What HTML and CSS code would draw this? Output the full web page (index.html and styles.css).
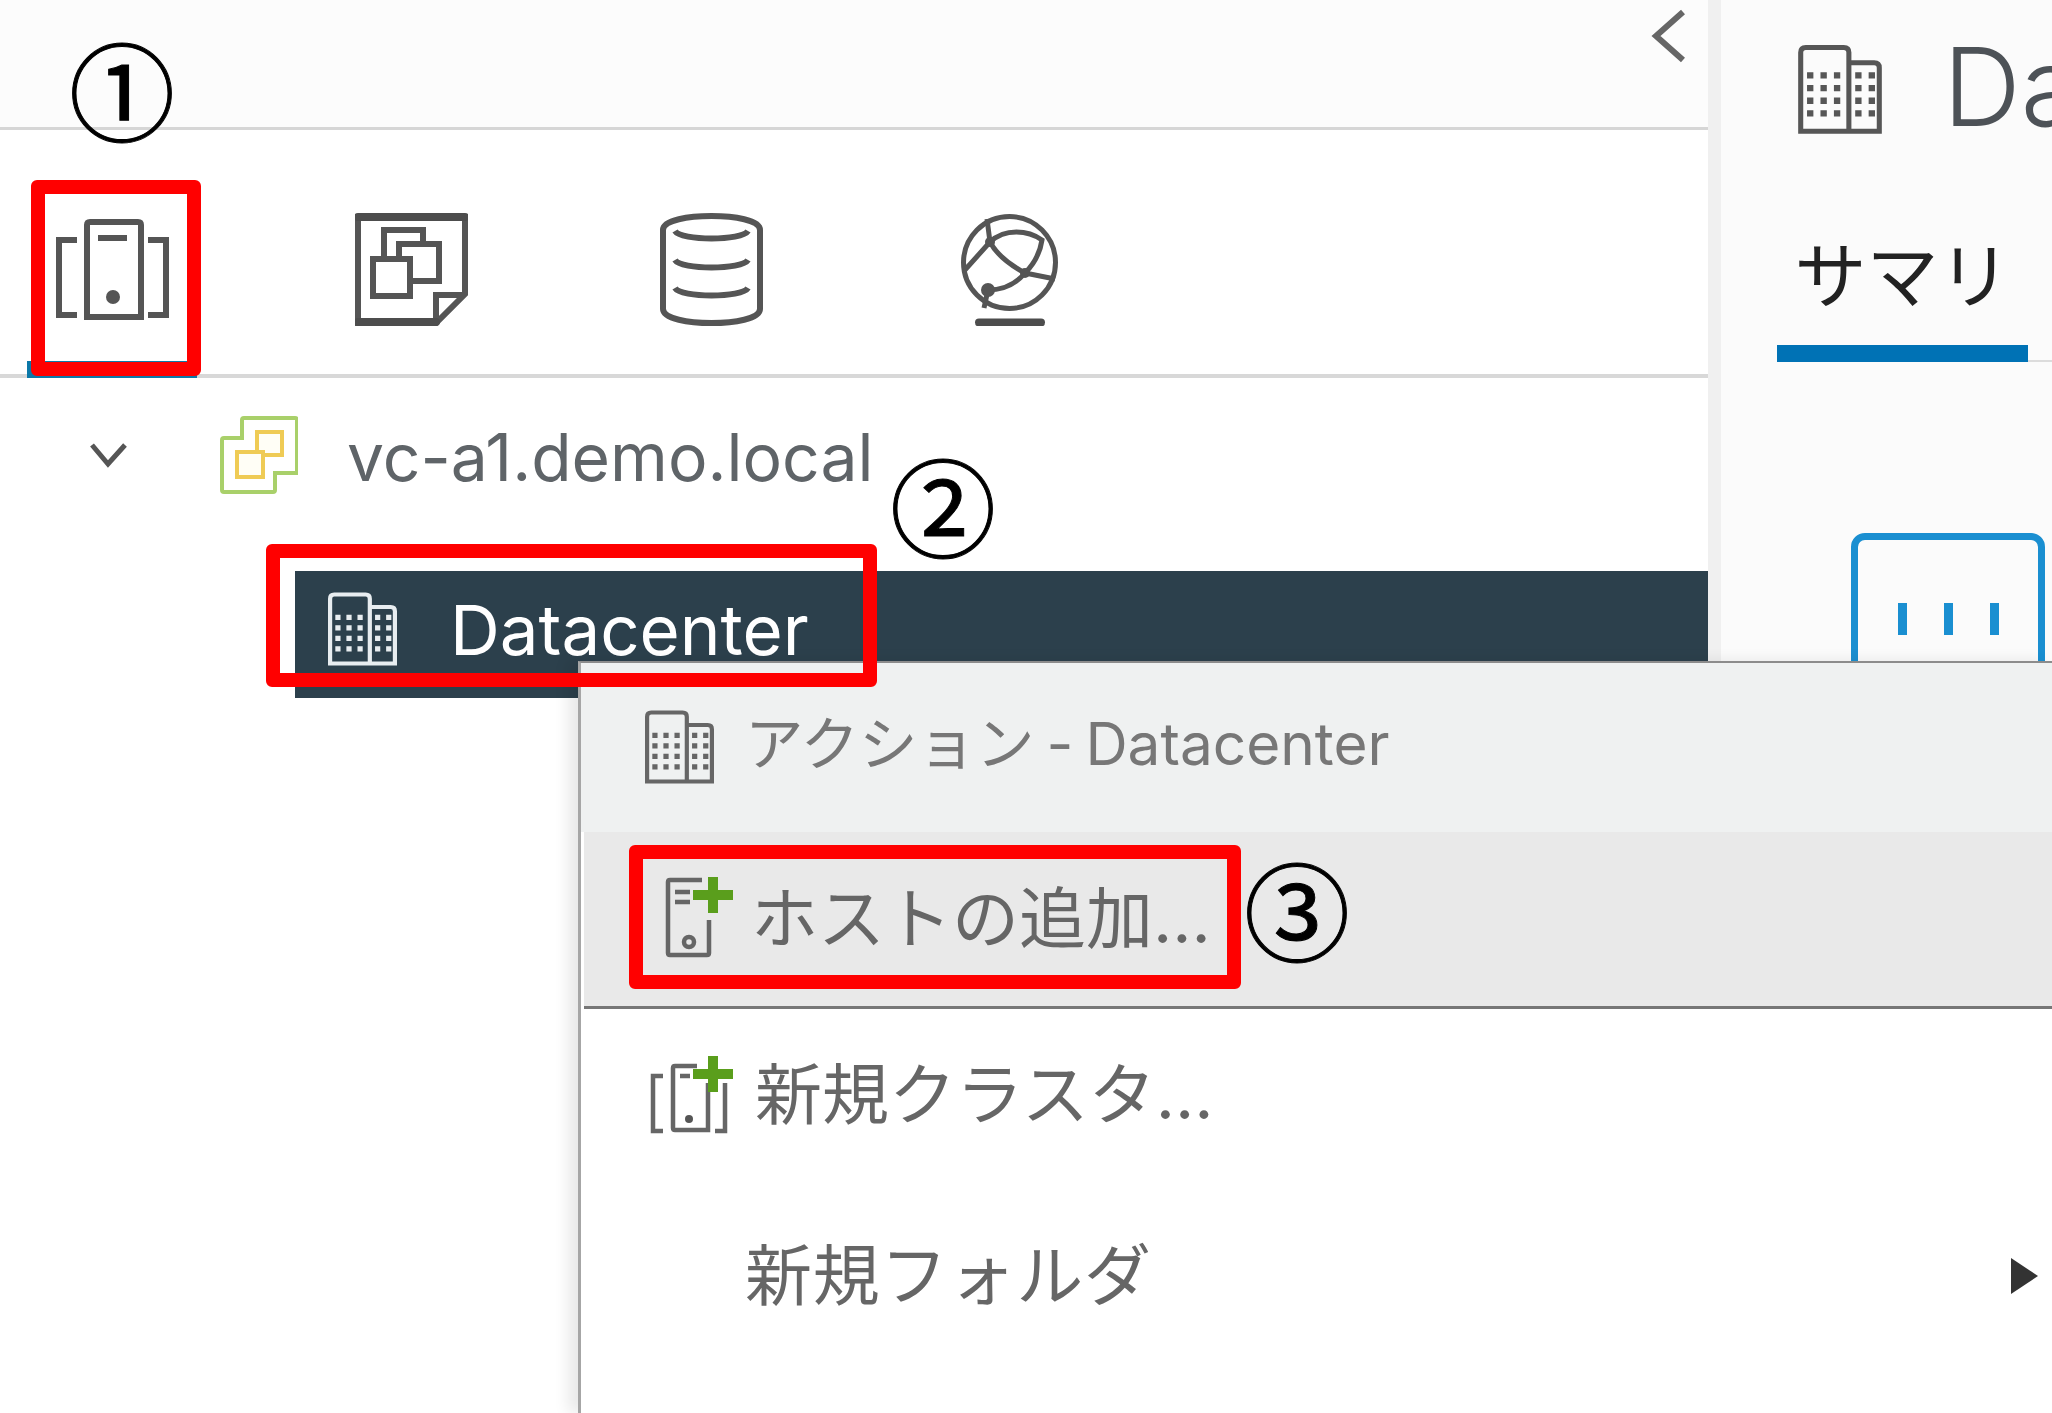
FILE: index.html
```html
<!DOCTYPE html>
<html lang="ja">
<head>
<meta charset="utf-8">
<title>vSphere Client</title>
<link rel="stylesheet" href="styles.css">
</head>
<body>
<svg class="defs" width="0" height="0" aria-hidden="true">
  <symbol id="building" viewBox="2 1 33 35.500">
    <path class="ln" d="M3 35V4q0-2 2-2h15q2 0 2 2v31zM22 8h10q2 0 2 2v25H22"/>
    <path class="dots" d="M5.500 13h15M5.500 18h15M5.500 23h15M5.500 28h15M24.500 13h8M24.500 18h8M24.500 23h8M24.500 28h8"/>
  </symbol>
</svg>

<div class="app">
  <section class="nav">
    <header class="nav-head">
      <svg class="collapse" viewBox="0 0 35 54"><path d="M32 3 5 27l27 24"/></svg>
    </header>
    <div class="tabs">
      <div class="tab active">
        <svg class="tab-icon" viewBox="0 0 113 113"><g class="ico">
          <path d="M31 104V12q0-3 3-3h48q3 0 3 3v92zM42 25h29M21 27H3v75h18M92 27h18v75H92"/></g>
          <circle class="fill" cx="57" cy="84" r="7"/></svg>
      </div>
      <div class="tab">
        <svg class="tab-icon" viewBox="0 0 113 113"><g class="ico">
          <path d="M3 4h107v77l-29 29H3zM81 110V82h28M29 44V17h39v12M44 44V31h40v37H55M18 46h37v37H18z"/></g>
          <path class="thick" d="M3 4h107M3 109h78"/></svg>
      </div>
      <div class="tab">
        <svg class="tab-icon" viewBox="0 0 113 113"><g class="ico">
          <path d="M8 17C8 7 34 3 56.500 3S105 7 105 17v79c0 10-26 14-48.500 14S8 106 8 96zM20 18c6 10 67 10 73 0M20 47c6 10 67 10 73 0M20 75c6 10 67 10 73 0"/></g></svg>
      </div>
      <div class="tab">
        <svg class="tab-icon" viewBox="0 0 113 113"><g class="ico globe">
          <circle cx="55.500" cy="49.500" r="46"/>
          <path d="M36 29 33 6M36 29 10 58M36 29c15-14 38-12 52-2-2 13-8 24-17 33-15-8-28-18-35-31M71 60l30 6M71 60c-10 12-23 17-37 17l-4 18"/></g>
          <circle class="fill" cx="36" cy="29" r="5"/><circle class="fill" cx="71" cy="60" r="5"/><circle class="fill" cx="34" cy="77" r="7"/>
          <path class="thick" d="M25 109.500h62"/></svg>
      </div>
    </div>
    <div class="tree">
      <div class="tree-root">
        <svg class="tree-chevron" viewBox="0 0 39 26"><path d="M3 3l16 19L36 3"/></svg>
        <svg class="vc-icon" viewBox="0 0 78 79">
          <path class="vc-green" d="M24 2h51q2 0 2 2v53H55v17q0 2-2 2H4q-2 0-2-2V24q0-2 2-2h18V4q0-2 2-2z"/>
          <rect class="vc-yellow" x="37" y="16" width="25" height="23"/>
          <rect class="vc-yellow" x="17" y="36" width="26" height="25"/>
        </svg>
        <span class="tree-label">vc-a1.demo.local</span>
      </div>
      <div class="tree-selected">
        <svg class="dc-icon light"><use href="#building"/></svg>
        <span>Datacenter</span>
      </div>
    </div>
  </section>

  <div class="divider"></div>

  <section class="detail">
    <div class="detail-head">
      <svg class="detail-icon"><use href="#building"/></svg>
      <h1 class="detail-title">Datacenter</h1>
    </div>
    <div class="detail-tabs">
      <div class="detail-tab">サマリ</div>
      <div class="detail-rest"></div>
    </div>
    <div class="card">
      <span class="tick"></span><span class="tick"></span><span class="tick"></span>
    </div>
  </section>
</div>

<div class="menu">
  <div class="menu-head">
    <svg class="dc-icon"><use href="#building"/></svg>
    <span class="menu-title">アクション - Datacenter</span>
  </div>
  <div class="menu-item hover">
    <svg class="add-host" viewBox="0 0 68 84"><g class="ico sm">
      <path d="M37 3H5q-2 0-2 2v71q0 2 2 2h37q2 0 2-2V43M10 15h15M10 25h15"/><circle cx="24" cy="65" r="5"/></g>
      <path class="plus" d="M48 0v36M28 18h40"/></svg>
    <span class="menu-label">ホストの追加...</span>
  </div>
  <div class="menu-list">
    <div class="menu-item plain">
      <svg class="add-cluster" viewBox="0 0 83 78"><g class="ico sm">
        <path d="M13 20H3v55h10M47 10H25q-2 0-2 2v60q0 2 2 2h33V27M30 20h10M65 75h10V27"/><circle class="fill" cx="39" cy="63" r="4"/></g>
        <path class="plus" d="M63 0v36M43 18h40"/></svg>
      <span class="menu-label">新規クラスタ...</span>
    </div>
    <div class="menu-item plain folder">
      <span class="menu-label wide">新規フォルダ</span>
      <i class="arrow"></i>
    </div>
  </div>
</div>

<div class="mark mark-1"></div>
<div class="mark mark-2"></div>
<div class="mark mark-3"></div>
<span class="num num-1">①</span>
<span class="num num-2">②</span>
<span class="num num-3">③</span>
</body>
</html>
```
FILE: styles.css
```css
* { box-sizing: border-box; }
html, body { margin: 0; height: 100%; }
body {
  width: 2052px; height: 1413px; overflow: hidden; position: relative; background: #fff;
  font-family: Inter, "Noto Sans CJK JP", sans-serif; color: #565656;
}
.defs { position: absolute; }
.app { display: grid; grid-template-columns: 1708px 13px 1fr; height: 100%; }
.ico, .ln, .collapse path, .tree-chevron path { fill: none; stroke: #555; stroke-width: 6; }
.ico.sm { stroke: #666; stroke-width: 4.500; }
.ico.globe { stroke-width: 5; }
.ln { stroke-width: 2; stroke: currentColor; }
.dots { fill: none; stroke: currentColor; stroke-width: 2.500; stroke-dasharray: 2.500 2.800; }
.fill { fill: #555; stroke: none; }
.thick { fill: none; stroke: #4d4d4d; stroke-width: 8; stroke-linecap: round; }
.plus { fill: none; stroke: #5a9e1c; stroke-width: 10; }

.nav { background: #fff; min-width: 0; }
.nav-head {
  height: 130px; background: #fcfcfc; border-bottom: 3px solid #d6d6d6;
  display: flex; justify-content: flex-end; padding: 9px 22px 0 0;
}
.collapse { width: 35px; height: 54px; }
.collapse path { stroke: #666; }
.tabs {
  height: 248px; border-bottom: 4px solid #d8d8d8;
  display: flex; gap: 129.500px; padding-left: 27px;
}
.tab {
  width: 170px; height: 248px; padding-top: 83px;
  display: flex; justify-content: center; align-items: flex-start;
}
.tab.active { border-bottom: 17px solid #0b78a8; }
.tab-icon { width: 113px; height: 113px; }

.tree { display: flex; flex-direction: column; padding-top: 38px; }
.tree-root { display: flex; align-items: center; height: 79px; padding-left: 89px; }
.tree-chevron { width: 39px; height: 26px; margin-right: 92px; margin-top: -2px; }
.tree-chevron path { stroke: #555; stroke-width: 5; }
.vc-icon { width: 78px; height: 79px; margin-right: 49px; }
.vc-green { fill: #fff; stroke: #a9d06a; stroke-width: 4; }
.vc-yellow { fill: #fffef6; stroke: #efcb55; stroke-width: 4; }
.tree-label { font-size: 66px; line-height: 79px; color: #5f6468; white-space: nowrap; margin-top: 4px; }
.tree-selected {
  margin: 76px 0 0 295px; height: 127px; background: #2c404c; color: #fff;
  display: flex; align-items: center; gap: 53px; padding: 0 0 10px 33px;
  font-size: 69px;
}
.dc-icon { width: 69px; height: 75px; }
.light { color: #e8edf0; }

.divider { background: #f0f0f0; }

.detail { background: #fbfbfb; min-width: 0; overflow: hidden; }
.detail-head { display: flex; align-items: center; gap: 68px; height: 90px; margin-top: 45px; padding-left: 77px; color: #565656; }
.detail-icon { width: 84px; height: 90px; flex: none; }
.detail-title { margin: -7px 0 0 -7px; font-size: 108px; line-height: 90px; font-weight: 300; color: #4d5257; white-space: nowrap; }
.detail-tabs { display: flex; align-items: flex-end; padding-left: 56px; height: 227px; }
.detail-tab {
  width: 251px; height: 137px; display: flex; justify-content: center; padding-top: 9px;
  font-size: 72px; line-height: 84px; color: #222; border-bottom: 17px solid #0072b5;
}
.detail-rest { flex: 1; border-bottom: 2px solid #dcdcdc; }
.card {
  width: 194px; height: 200px; margin: 171px 0 0 130px;
  border: 7px solid #1a8fd1; border-radius: 14px;
  display: flex; gap: 37px; justify-content: center; padding-top: 63px;
}
.tick { width: 9px; height: 32px; background: #1a8fd1; }

.menu {
  position: absolute; left: 578px; top: 661px; right: 0; bottom: 0;
  background: #fff; border-left: 3px solid #a6a6a6; border-top: 2px solid #8c8c8c;
  padding-left: 3px; box-shadow: -10px 0 14px rgba(0, 0, 0, .09);
  font-size: 67px; color: #666; white-space: nowrap;
}
.menu-head {
  height: 169px; background: #eff1f1; margin-left: -3px; padding-left: 64px;
  display: flex; align-items: center; gap: 31px; font-size: 58.500px; color: #777;
}
.menu-head .dc-icon { color: #666; }
.menu-title { margin-top: -17px; word-spacing: -4.500px; }
.menu-label { margin-top: -12px; }
.wide { letter-spacing: .8px; }
.menu-item { display: flex; align-items: center; gap: 18px; }
.menu-item.hover { height: 177px; background: #e9e9e9; border-bottom: 3px solid #777; padding-left: 81px; }
.add-host { width: 68px; height: 84px; }
.add-cluster { width: 83px; height: 78px; }
.menu-list { display: flex; flex-direction: column; gap: 13px; padding-top: 2px; }
.menu-item.plain { height: 168px; padding-left: 66px; gap: 22px; }
.menu-item.folder { padding: 0 14px 0 161px; justify-content: space-between; }
.arrow {
  width: 0; height: 0;
  border-left: 27px solid #333; border-top: 18px solid transparent; border-bottom: 18px solid transparent;
}

.mark { position: absolute; border: 14px solid #f00; border-radius: 6px; }
.mark-1 { left: 31px; top: 180px; width: 170px; height: 196px; }
.mark-2 { left: 266px; top: 544px; width: 611px; height: 143px; }
.mark-3 { left: 629px; top: 845px; width: 612px; height: 144px; }

.num {
  position: absolute; font-family: "Noto Sans CJK JP", sans-serif; font-size: 106px; line-height: 106px;
  color: #000; -webkit-text-stroke: 1px #000;
}
.num-1 { left: 69px; top: 34px; }
.num-2 { left: 890px; top: 450px; }
.num-3 { left: 1244px; top: 854px; }
```
